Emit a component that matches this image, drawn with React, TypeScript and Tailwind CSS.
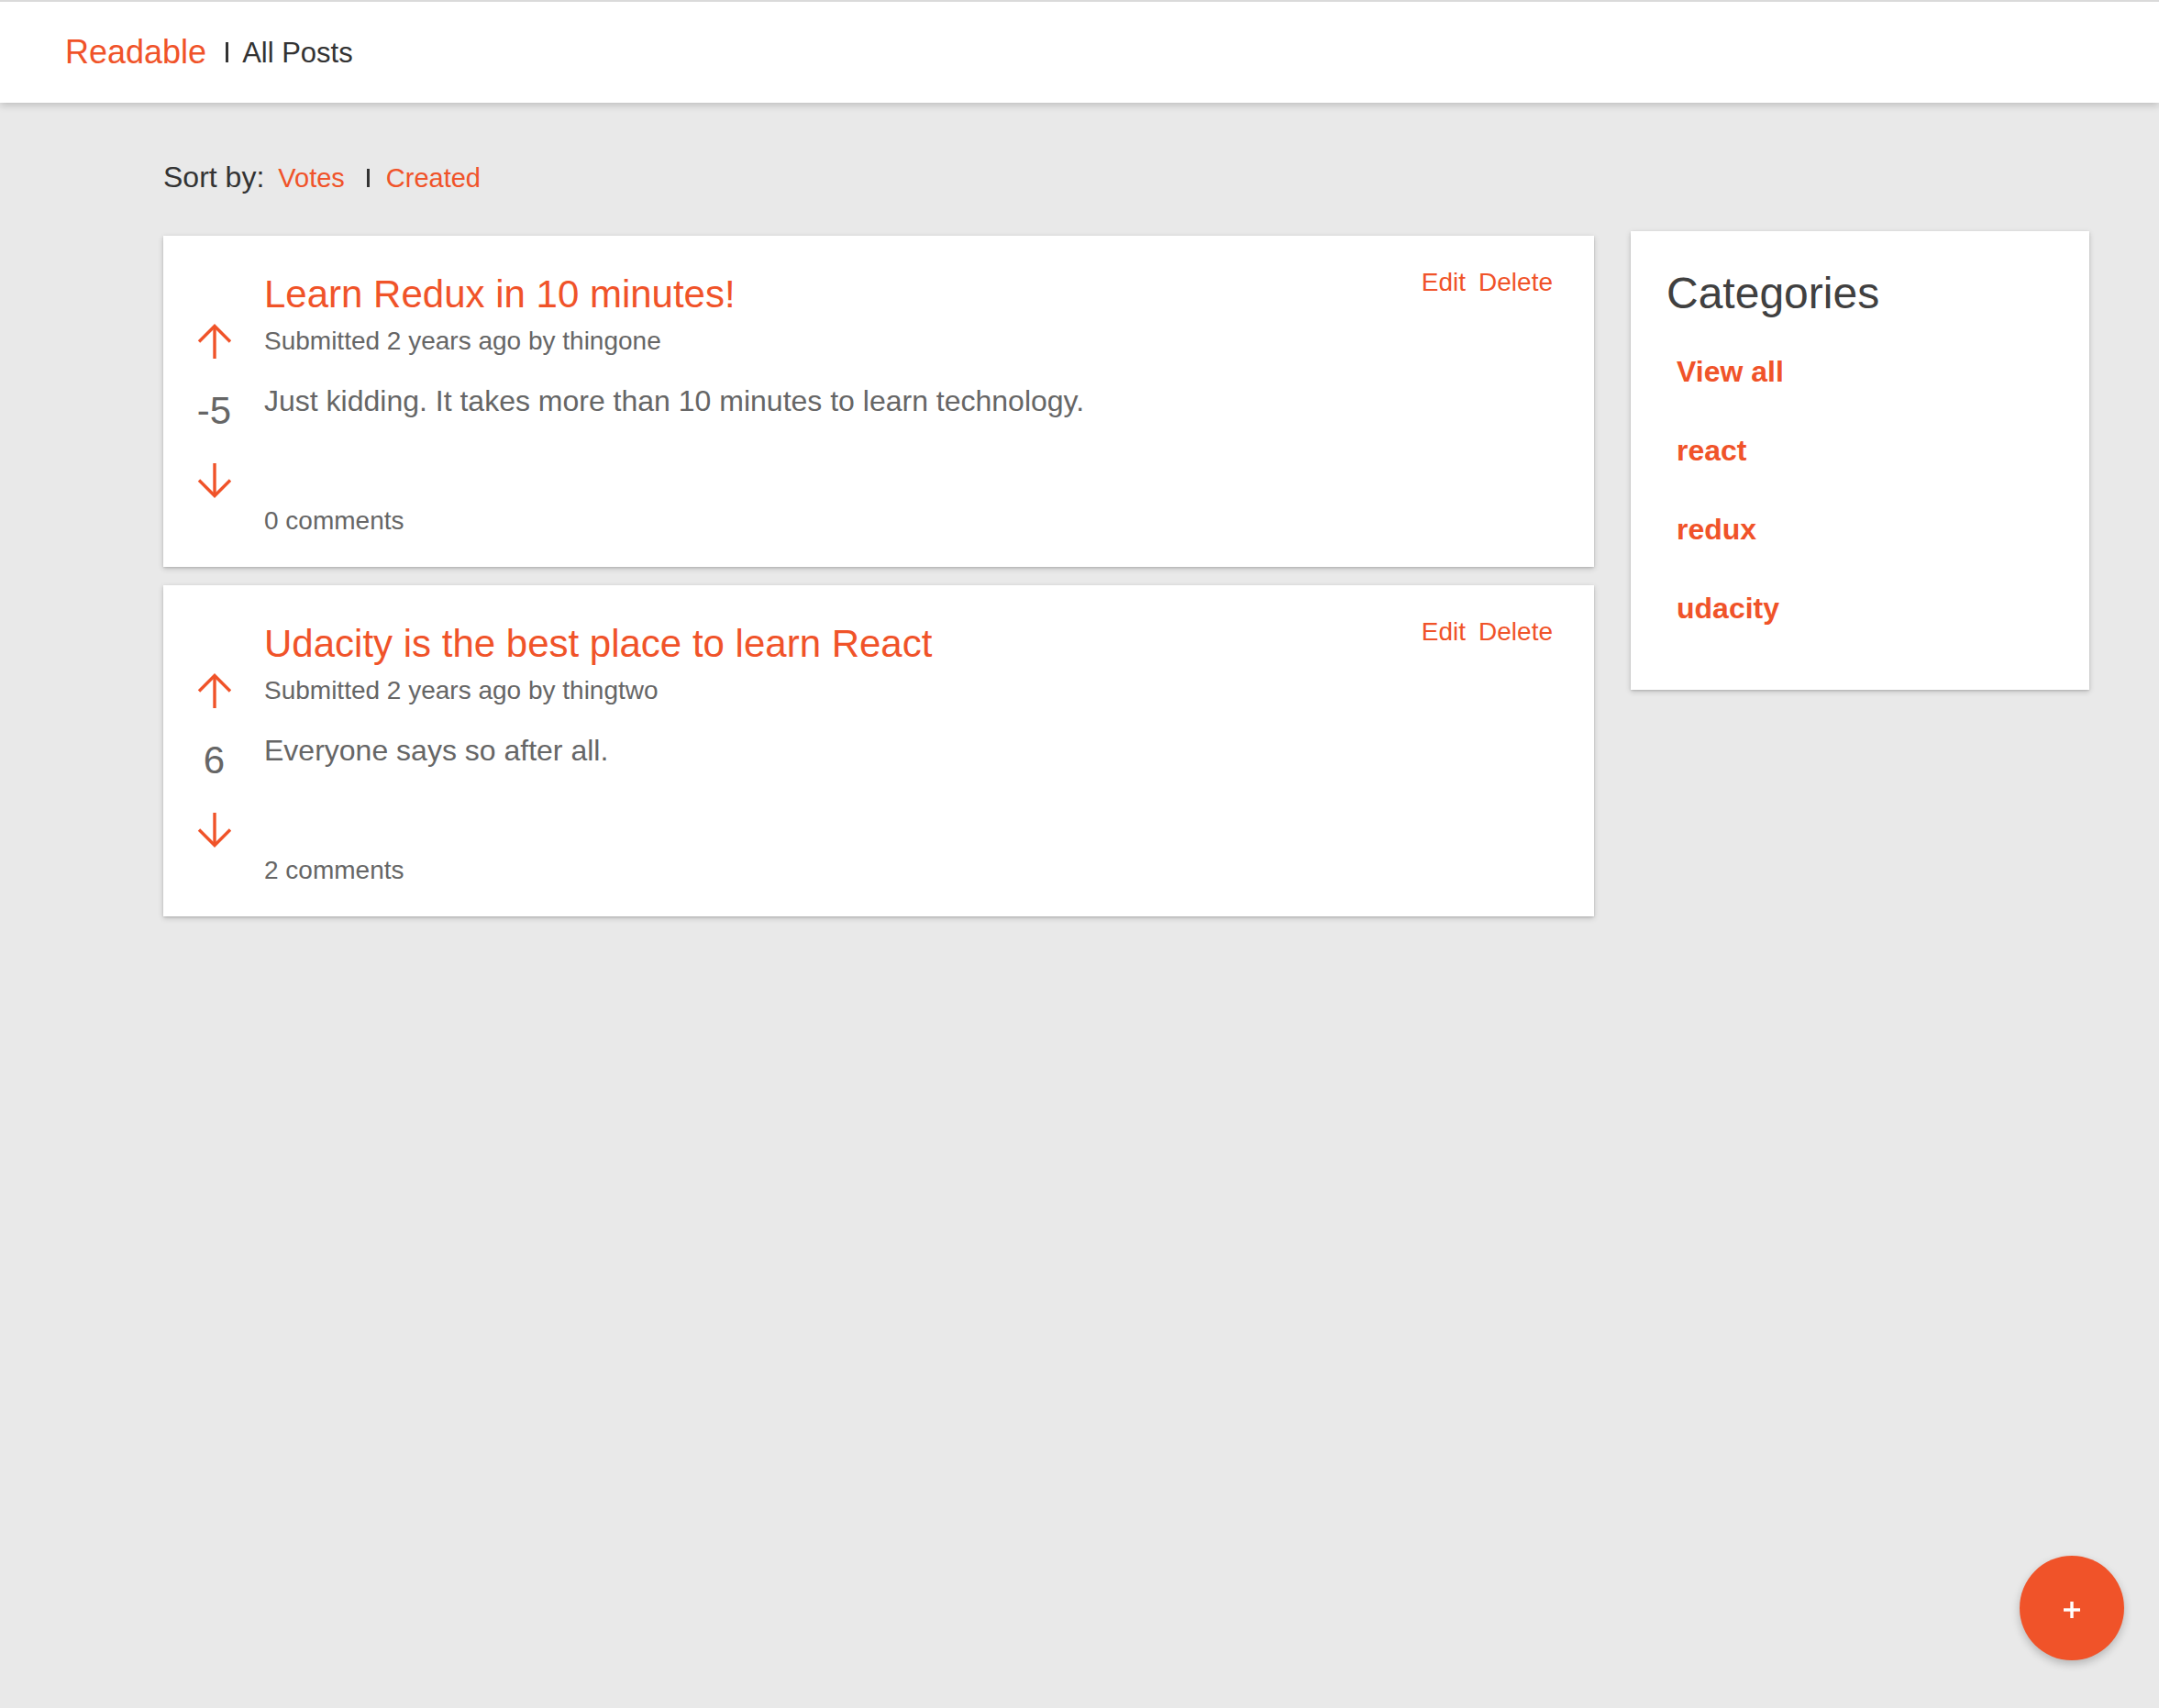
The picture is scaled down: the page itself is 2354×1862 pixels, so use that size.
import React from "react";

const ORANGE = "text-[#f05329]";

function ArrowUp() {
  return (
    <svg width="38" height="38" viewBox="0 0 38 38" fill="none" stroke="currentColor" strokeWidth="3.4" className="text-[#f05329]">
      <path d="M19 2.5 V38" />
      <path d="M2 19.5 L19 2.5 L36 19.5" />
    </svg>
  );
}

function ArrowDown() {
  return (
    <svg width="38" height="38" viewBox="0 0 38 38" fill="none" stroke="currentColor" strokeWidth="3.4" className="text-[#f05329]">
      <path d="M19 0 V35.5" />
      <path d="M2 18.5 L19 35.5 L36 18.5" />
    </svg>
  );
}

type Post = { title: string; author: string; body: string; votes: number; comments: number };

const posts: Post[] = [
  {
    title: "Learn Redux in 10 minutes!",
    author: "thingone",
    body: "Just kidding. It takes more than 10 minutes to learn technology.",
    votes: -5,
    comments: 0,
  },
  {
    title: "Udacity is the best place to learn React",
    author: "thingtwo",
    body: "Everyone says so after all.",
    votes: 6,
    comments: 2,
  },
];

function PostCard({ post, first }: { post: Post; first: boolean }) {
  return (
    <div
      className={`flex bg-white pl-[18px] pr-[45px] pt-[35px] pb-[34px] shadow-[0_2px_6px_rgba(0,0,0,0.18),0_1px_2px_rgba(0,0,0,0.12)] ${first ? "" : "mt-[20px]"}`}
    >
      <div className="w-[75px] flex flex-col items-center pt-[61px] shrink-0">
        <ArrowUp />
        <div className="mt-[36px] text-[42px] leading-[42px] text-[#666666]">{post.votes}</div>
        <div className="mt-[36px]">
          <ArrowDown />
        </div>
      </div>
      <div className="ml-[17px] flex-1">
        <div className="flex justify-between items-start">
          <div className={`mt-[5px] text-[42px] leading-[48px] ${ORANGE}`}>{post.title}</div>
          <div className={`flex text-[28px] leading-[32px] ${ORANGE}`}>
            <span>Edit</span>
            <span className="ml-[14px]">Delete</span>
          </div>
        </div>
        <div className="mt-[11px] text-[28px] leading-[32px] text-[#666666]">
          Submitted 2 years ago by {post.author}
        </div>
        <div className="mt-[29px] text-[32px] leading-[40px] text-[#666666]">{post.body}</div>
        <div className="mt-[95px] text-[28px] leading-[32px] text-[#666666]">{post.comments} comments</div>
      </div>
    </div>
  );
}

export default function App() {
  const cats = ["View all", "react", "redux", "udacity"];
  return (
    <div className="min-h-screen bg-[#e9e9e9] font-['Liberation_Sans',Arial,sans-serif]">
      <header className="h-[112px] bg-white border-t-2 border-[#dadada] flex items-center pl-[71px] shadow-[0_3px_8px_rgba(0,0,0,0.18)] relative z-10">
        <span className={`text-[36px] leading-none ${ORANGE}`}>Readable</span>
        <span className="ml-[21px] w-[3px] h-[22px] bg-[#333333]" />
        <span className="ml-[15px] text-[31px] leading-none text-[#333333]">All Posts</span>
      </header>

      <main className="flex pl-[178px] pt-[63px]">
        <div className="w-[1560px] shrink-0">
          <div className="flex items-baseline h-[36px]">
            <span className="text-[32px] leading-[36px] text-[#333333]">Sort by:</span>
            <span className={`ml-[15px] text-[29px] leading-[36px] ${ORANGE}`}>Votes</span>
            <span className="ml-[24px] w-[3px] h-[20px] bg-[#333333]" />
            <span className={`ml-[18px] text-[29px] leading-[36px] ${ORANGE}`}>Created</span>
          </div>
          <div className="mt-[46px]">
            {posts.map((p, i) => (
              <PostCard key={p.title} post={p} first={i === 0} />
            ))}
          </div>
        </div>

        <aside className="ml-[40px] mt-[77px] w-[500px] h-[500px] shrink-0 bg-white pt-[40px] pl-[39px] shadow-[0_2px_6px_rgba(0,0,0,0.18),0_1px_2px_rgba(0,0,0,0.12)]">
          <h2 className="text-[48px] leading-[56px] text-[#404040]">Categories</h2>
          <div className="mt-[14px] ml-[11px]">
            {cats.map((c) => (
              <div key={c} className={`font-bold text-[32px] leading-[86px] ${ORANGE}`}>
                {c}
              </div>
            ))}
          </div>
        </aside>
      </main>

      <button className="fixed right-[38px] bottom-[52px] w-[114px] h-[114px] rounded-full bg-[#f05329] flex items-center justify-center shadow-[0_4px_10px_rgba(0,0,0,0.22)]">
        <svg width="18" height="18" viewBox="0 0 18 18" className="mt-[4px]">
          <rect x="0" y="7.3" width="18" height="3.4" fill="#ffffff" />
          <rect x="7.3" y="0" width="3.4" height="18" fill="#ffffff" />
        </svg>
      </button>
    </div>
  );
}
